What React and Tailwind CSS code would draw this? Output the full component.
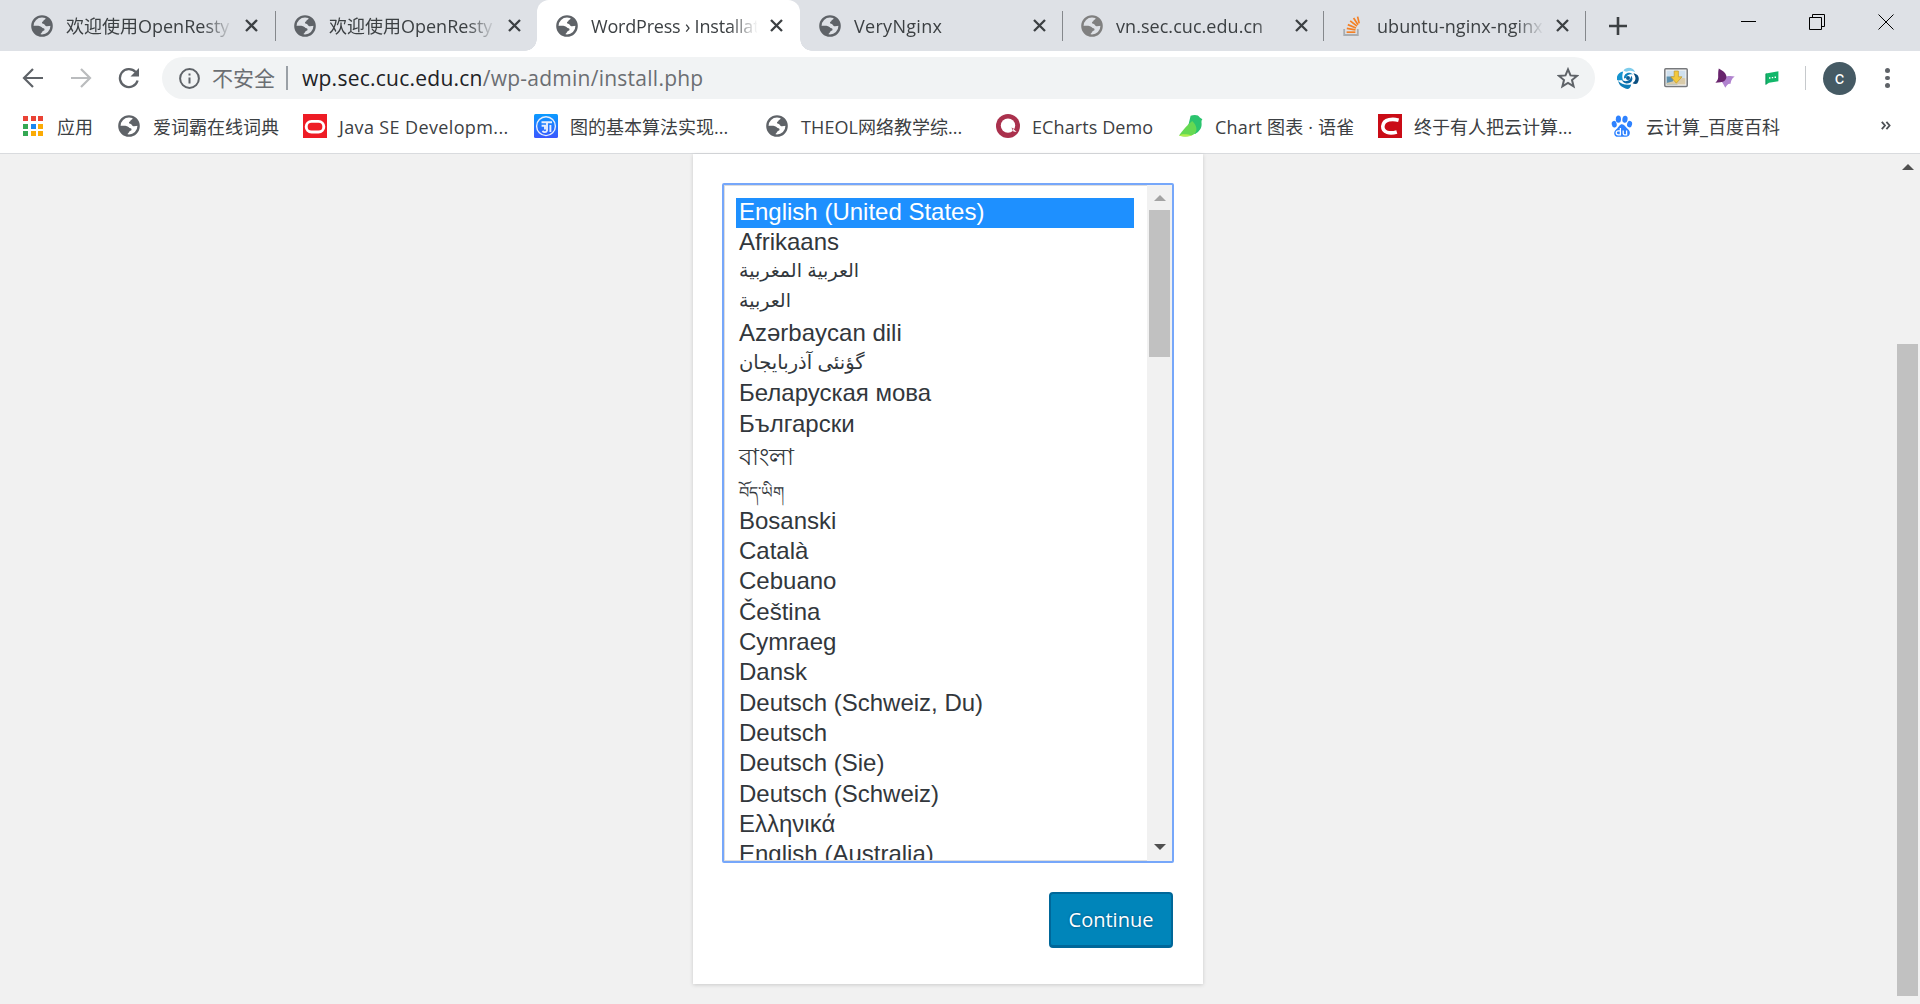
import React from "react";

const UI = "font-['Open_Sans','Noto_Sans_CJK_SC',sans-serif]";

function Globe({ color = "#5f6368" }) {
  return (
    <svg width="22" height="22" viewBox="0 0 22 22" className="shrink-0">
      <circle cx="11" cy="11" r="9.6" fill="none" stroke={color} strokeWidth="2.4" />
      <path
        fill={color}
        d="M14.5 2 C15 3.6 14.4 4.6 13 5 C12.2 5.4 12.6 6.4 11.4 6.8 C10.6 7.2 11 8.6 12 8.8 C13.6 9 14 10.4 14.8 11 C16.4 11.6 18.6 10.6 20.6 10.8 C20.8 6 18 3 14.5 2 Z"
      />
      <path
        fill={color}
        d="M1.6 11 C4 10.8 7 10.6 9 11.2 C10.6 11.6 11 13 12.6 13.2 C14 13.6 13.8 15.6 12.4 15.8 C10.8 16.2 11.4 17.6 10.2 18.2 C9.4 18.8 9.2 19.6 9.2 20.6 C4.6 19.8 1.4 16 1.6 11 Z"
      />
    </svg>
  );
}

function StackIcon() {
  return (
    <svg width="22" height="22" viewBox="0 0 22 22" fill="none" className="shrink-0">
      <path d="M2.2 14v6h13.6v-6" stroke="#a9adb1" strokeWidth="1.8" />
      <g stroke="#f48024" strokeWidth="1.7">
        <path d="M4.6 17.2h8.8" />
        <path d="M4.8 13.4l8.7 1.4" />
        <path d="M5.8 9.6l8.2 3.4" />
        <path d="M8.2 5.8l6.8 5.4" />
        <path d="M11.6 3l4.4 6.8" />
        <path d="M15.6 1.6l1.6 6.8" />
      </g>
    </svg>
  );
}

function CloseX() {
  return (
    <svg width="13" height="13" viewBox="0 0 13 13" className="shrink-0">
      <path d="M1 1l11 11M12 1L1 12" stroke="#3c4043" strokeWidth="2.3" />
    </svg>
  );
}

function Tab({ icon, title, active, sep, width, track }) {
  return (
    <div className={`relative flex h-[51px] shrink-0 items-center pl-[19px] ${width} ${active ? "rounded-t-[12px] bg-white" : ""}`}>
      {active && (
        <>
          <div className="absolute bottom-0 -left-3 h-3 w-3 bg-[radial-gradient(circle_at_0_0,transparent_11.5px,white_12px)]" />
          <div className="absolute bottom-0 -right-3 h-3 w-3 bg-[radial-gradient(circle_at_100%_0,transparent_11.5px,white_12px)]" />
        </>
      )}
      {icon}
      <div className={`ml-[13px] mt-[1px] w-[166px] shrink-0 overflow-hidden whitespace-nowrap text-[18px] leading-[28px] text-[#3c4043] [mask-image:linear-gradient(to_right,black_138px,transparent_167px)] ${track}`}>
        {title}
      </div>
      <div className="ml-[13px] flex">
        <CloseX />
      </div>
      {sep && <div className="absolute -right-[1px] top-[11px] h-[30px] w-[1.5px] bg-[#85888c]" />}
    </div>
  );
}

function Bookmark({ icon, width, children }) {
  return (
    <div className={`flex h-full shrink-0 items-center ${width}`}>
      <div className="flex w-6 shrink-0 items-center justify-center">{icon}</div>
      <div className="ml-3 mt-[2px] whitespace-nowrap text-[18px] leading-[28px] text-[#3c4043]">{children}</div>
    </div>
  );
}

function AppsIcon() {
  return (
    <div className="grid grid-cols-3 gap-[2.5px]">
      <i className="h-[5px] w-[5px] bg-[#ea4335]" />
      <i className="h-[5px] w-[5px] bg-[#ea4335]" />
      <i className="h-[5px] w-[5px] bg-[#ea4335]" />
      <i className="h-[5px] w-[5px] bg-[#34a853]" />
      <i className="h-[5px] w-[5px] bg-[#1a86f0]" />
      <i className="h-[5px] w-[5px] bg-[#fbab05]" />
      <i className="h-[5px] w-[5px] bg-[#34a853]" />
      <i className="h-[5px] w-[5px] bg-[#fbab05]" />
      <i className="h-[5px] w-[5px] bg-[#fbab05]" />
    </div>
  );
}

const OracleIcon = () => (
  <svg width="24" height="24" viewBox="0 0 24 24">
    <rect width="24" height="24" fill="#ee1c25" />
    <rect x="3.2" y="7.4" width="17.6" height="10.6" rx="5.3" fill="none" stroke="#fff" strokeWidth="2.9" />
  </svg>
);

const BlueIcon = () => (
  <svg width="24" height="24" viewBox="0 0 24 24" fill="none" stroke="#e8eefc">
    <defs>
      <linearGradient id="bl" x1="0" y1="0" x2="0" y2="1">
        <stop offset="0" stopColor="#0a9bff" />
        <stop offset="1" stopColor="#3a57ff" />
      </linearGradient>
    </defs>
    <rect width="24" height="24" rx="1.5" fill="url(#bl)" stroke="none" />
    <circle cx="12" cy="12.2" r="9.4" strokeWidth="1.4" />
    <path d="M7.5 8.200h10.500M13 8.200v8.200c-.6 2.400-3.200 2-4.600.6M7.600 11.800h3.400v3.600M16.400 11v7" strokeWidth="1.900" />
  </svg>
);

const EchartsIcon = () => (
  <svg width="24" height="24" viewBox="0 0 24 24">
    <circle cx="12" cy="12" r="12" fill="#aa314d" />
    <circle cx="12" cy="11.6" r="7.2" fill="#fff" />
    <path d="M15.5 13.5l1.8 4.6 4.4 1.2-3.4-4.4z" fill="#aa314d" />
    <path d="M16.6 14.2l.8 3.4 3.2.4z" fill="#fff" />
  </svg>
);

const BirdIcon = () => (
  <svg width="24" height="24" viewBox="0 0 24 24">
    <path d="M11.6 1.8C15 .6 19.6.6 20.8 3.6c1 .8 2 1.2 2.6 1.6-1 .6-1 2.4-.8 4.4.4 5-2.8 8.4-6.4 10.4L8 17z" fill="#2bc46e" />
    <path d="M13.2 7C8 11 4 16 0 21.6c5.6 1.8 12 1 15.6-1.8C18.6 16.6 18 11.4 13.2 7z" fill="#66d952" />
    <path d="M0 21.6c3.6-2.4 8.4-1 13.2-.4C9.2 23.2 3.6 22.8 0 21.6z" fill="#b3ee4f" />
  </svg>
);

const CIcon = () => (
  <svg width="24" height="24" viewBox="0 0 24 24">
    <rect width="24" height="24" fill="#ca0c16" />
    <path d="M20.6 6.2C15.5 4.8 5.5 4.400 4.800 12.400c-.2 6.400 7.200 7.600 14 5.600" fill="none" stroke="#fff" strokeWidth="3.6" />
  </svg>
);

const BaiduIcon = () => (
  <svg width="22" height="24" viewBox="0 0 22 24">
    <g fill="#2e82ff">
      <ellipse cx="7.4" cy="5.2" rx="2.6" ry="3.6" />
      <ellipse cx="14" cy="5.2" rx="2.6" ry="3.5" transform="rotate(10 14 5)" />
      <ellipse cx="3.2" cy="10.2" rx="2.5" ry="3.3" transform="rotate(-12 3 10)" />
      <ellipse cx="18.6" cy="10" rx="2.5" ry="3.3" transform="rotate(12 18 10)" />
      <path d="M11 10.2c2.4 0 3.4 2.4 5 4 2 1.8 3.2 3 2.8 5.4-.4 2.6-2.2 3.4-4.2 3.2-2.6-.2-4.8-.2-7.2 0-2.4.2-4-.8-4.2-3.4-.2-2.4 1.4-3.6 3-5 1.6-1.6 2.400-4.200 4.800-4.200z" />
    </g>
    <path d="M9.4 14v6.8H7.200c-2.6 0-2.600-4 0-4h2M12.200 16.600v3c0 1.200.6 1.300 1.400 1.300h2v-4.300" fill="none" stroke="#fff" strokeWidth="1.3" />
  </svg>
);

const SwirlIcon = () => (
  <svg width="22" height="22" viewBox="0 0 22 22">
    <circle cx="11" cy="11" r="2" fill="#0b5d94" />
    <path d="M6.500 3.600C9 0 15.500-.6 18.200 5.200 15.600 3.400 12.600 3.200 10.200 4.600 8.600 4.800 7.400 4.400 6.500 3.600z" fill="#7fcdec" />
    <path d="M6.200 4.600C5 8 5 10.400 6 13.600 2.400 12.600-.6 15-.2 10.600.2 7.600 2.800 5 6.200 4.600z" fill="#1594cf" />
    <path d="M7 11.400C6.600 6.400 12 3.800 16 7.400 12.800 6.600 9.600 7.600 9 11z" fill="#0d83bf" />
    <path d="M16.400 6.400C21.400 6.400 23.400 11.600 20.400 16.200 19.600 17.200 17 17 15.600 16.200 19.400 13.800 19.200 9.600 16.400 6.400z" fill="#0a4f80" />
    <path d="M14.200 8.800C17 12 14.600 17 9.400 16.600 7 16.200 5.400 14.800 5.200 13 8 15.200 13.400 14.600 14.200 8.800z" fill="#0b6aa6" />
    <path d="M1.200 14C4 17 8.800 18.600 14.200 17.400 13.800 20 12.400 22 10.200 22 5.600 20.800 2 18.400 1.200 14z" fill="#0e7db8" />
  </svg>
);

const PictureIcon = () => (
  <svg width="24" height="20" viewBox="0 0 24 20">
    <rect x=".8" y=".8" width="22.4" height="17.6" rx="1" fill="#f4f4f4" stroke="#77797c" strokeWidth="1.5" />
    <rect x="2.6" y="2.6" width="18.8" height="7.8" fill="#cfe0ee" />
    <path d="M2.600 8.600h7l4 7.800h-11z" fill="#5d90ad" />
    <path d="M2.600 16.600v-1.600l6-1.400 3-4.600 9.800 1.200v6.400z" fill="#d9cbaa" />
    <path d="M10.2 3h4.200v5.800h3.600L12.3 15.2 6.8 8.800h3.400z" fill="#f3c93c" stroke="#c39a2a" strokeWidth=".7" />
  </svg>
);

const StarfishIcon = () => (
  <svg width="20" height="20" viewBox="0 0 20 20">
    <path d="M8 9.5c3.5-1.700 8-2 11.800-.9-2.200 1.600-3.600 3-4.200 7.200-2.600-.4-4 1.400-5.200 4-1.400-2.400-2-4-3.800-6.400z" fill="#b183cf" />
    <path d="M3.8.4C7 2.400 10.600 4 11.400 8c.4 3.800-2.600 6-6 6.200L.4 14.800c1.600-2 2.600-3 2.800-5.600C3.200 6 3 3.400 3.800.4z" fill="#68246d" />
  </svg>
);

const ChatIcon = () => (
  <svg width="14" height="14" viewBox="0 0 14 14">
    <path d="M1 2.400L13.400.2v10L4 11.800 1 13.800z" fill="#12b76a" />
    <path d="M.4 3l1-1v11L.4 14z" fill="#0b8a55" />
    <path d="M4 7h1.400M6.800 6.600h1.400M9.600 6.200H11" stroke="#fff" strokeWidth="1.400" />
  </svg>
);

const Tri = ({ up, color }) => (
  <svg width="12" height="6" viewBox="0 0 12 6">
    <path d={up ? "M0 6L6 0l6 6z" : "M0 0h12L6 6z"} fill={color} />
  </svg>
);

const LANGS = [
  ["English (United States)", "h-[30px] leading-[28px] bg-[#1e90ff] text-white"],
  ["Afrikaans", "h-[30px] leading-[28px]"],
  ["العربية المغربية", "h-[30px] leading-[25px] text-[19px]"],
  ["العربية", "h-[31px] leading-[25px] text-[19px]"],
  ["Azərbaycan dili", "h-[30px] leading-[28px]"],
  ["گؤنئی آذربایجان", "h-[30px] leading-[26px] text-[19.5px]"],
  ["Беларуская мова", "h-[31px] leading-[28px]"],
  ["Български", "h-[32px] leading-[28px]"],
  ["বাংলা", "h-[34px] leading-[30px]"],
  ["བོད་ཡིག", "h-[31px] leading-[34px] text-[16px]"],
  ["Bosanski", "h-[30px] leading-[28px]"],
  ["Català", "h-[30px] leading-[28px]"],
  ["Cebuano", "h-[31px] leading-[28px]"],
  ["Čeština", "h-[30px] leading-[28px]"],
  ["Cymraeg", "h-[30px] leading-[28px]"],
  ["Dansk", "h-[31px] leading-[28px]"],
  ["Deutsch (Schweiz, Du)", "h-[30px] leading-[28px]"],
  ["Deutsch", "h-[30px] leading-[28px]"],
  ["Deutsch (Sie)", "h-[31px] leading-[28px]"],
  ["Deutsch (Schweiz)", "h-[30px] leading-[28px]"],
  ["Ελληνικά", "h-[30px] leading-[28px]"],
  ["English (Australia)", "h-[30px] leading-[28px]"],
];

export default function App() {
  return (
    <div className={`flex h-[1004px] w-[1920px] flex-col overflow-hidden bg-[#f1f1f1] ${UI}`}>
      <header className="shrink-0 border-b border-[#d9dbde] bg-white">
        <div className="flex h-[51px] items-center bg-[#dee1e6] pl-[12px]">
          <Tab icon={<Globe />} title="欢迎使用OpenResty" sep width="w-[263px]" track="" />
          <Tab icon={<Globe />} title="欢迎使用OpenResty" width="w-[262px]" track="" />
          <Tab icon={<Globe />} title="WordPress › Installation" active width="w-[263px]" track="tracking-[-0.2px]" />
          <Tab icon={<Globe />} title="VeryNginx" sep width="w-[262px]" track="tracking-[0.3px]" />
          <Tab icon={<Globe color="#808080" />} title="vn.sec.cuc.edu.cn" sep width="w-[261px]" track="tracking-[0.05px]" />
          <Tab icon={<StackIcon />} title="ubuntu-nginx-nginx" sep width="w-[262px]" track="tracking-[0.05px]" />
          <svg width="18" height="18" viewBox="0 0 18 18" className="ml-[24px]">
            <path d="M9 0v18M0 9h18" stroke="#3c4043" strokeWidth="2.6" />
          </svg>
          <div className="mr-[26px] ml-auto flex items-center gap-[53px] pb-[8px]">
            <div className="h-px w-[15px] bg-black" />
            <svg width="16" height="16" viewBox="0 0 16 16" fill="none" stroke="#000">
              <path d="M.5 3.500h12v12H.500zM3.500 3.500v-3h12v12h-3" />
            </svg>
            <svg width="16" height="16" viewBox="0 0 16 16" fill="none" stroke="#000">
              <path d="M.5.500l15 15M15.500.500l-15 15" />
            </svg>
          </div>
        </div>

        <div className="flex h-[54px] items-center pl-[22px]">
          <svg width="22" height="20" viewBox="0 0 22 20" fill="none" stroke="#5f6368" strokeWidth="2.2">
            <path d="M21 10H2.500M11 1L2 10l9 9" />
          </svg>
          <svg width="22" height="20" viewBox="0 0 22 20" fill="none" stroke="#babcbe" strokeWidth="2.2" className="ml-[26px]">
            <path d="M1 10h18.500M11 1l9 9-9 9" />
          </svg>
          <svg width="22" height="22" viewBox="0 0 22 22" className="ml-[26px]">
            <path d="M17.600 5A9 9 0 1 0 19.600 13.500" fill="none" stroke="#5f6368" strokeWidth="2.3" />
            <path d="M21 1v8.500h-8.500z" fill="#5f6368" />
          </svg>
          <div className="ml-[22px] flex h-[42px] w-[1433px] items-center rounded-full bg-[#f1f3f4] pl-[17px] pr-[16px]">
            <svg width="21" height="21" viewBox="0 0 21 21" fill="none" stroke="#5f6368" strokeWidth="2">
              <circle cx="10.500" cy="10.500" r="9.400" />
              <path d="M10.500 9.400v6M10.500 5.400v2.200" />
            </svg>
            <div className="ml-[12px] w-[74px] whitespace-nowrap text-[21px] leading-[30px] text-[#6b6f73]">不安全</div>
            <div className="h-6 w-[2px] bg-[#9aa0a6]" />
            <div className="ml-[14px] whitespace-nowrap text-[21px] leading-[30px] tracking-[0.25px] text-[#6b6e72]">
              <span className="text-[#202124]">wp.sec.cuc.edu.cn</span>/wp-admin/install.php
            </div>
            <svg width="22" height="22" viewBox="0 0 22 22" className="ml-auto">
              <path d="M11 2.400l2.500 6 6.500.5-5 4.200 1.600 6.300L11 16l-5.600 3.400L7 13.100 2 8.900l6.500-.5z" fill="none" stroke="#5f6368" strokeWidth="2" />
            </svg>
          </div>
          <div className="ml-[22px] flex w-[22px]"><SwirlIcon /></div>
          <div className="ml-[25px] flex w-[24px]"><PictureIcon /></div>
          <div className="ml-[27px] flex w-[20px]"><StarfishIcon /></div>
          <div className="ml-[30px] flex w-[14px]"><ChatIcon /></div>
          <div className="ml-[26px] h-6 w-px bg-[#c6c9cc]" />
          <div className="ml-[17px] flex h-[33px] w-[33px] items-center justify-center rounded-full bg-[#455a64] font-['Roboto',sans-serif] text-[18px] leading-none text-white">
            c
          </div>
          <div className="ml-[29px] flex flex-col gap-[3px]">
            <i className="h-[4.5px] w-[4.5px] rounded-full bg-[#5f6368]" />
            <i className="h-[4.5px] w-[4.5px] rounded-full bg-[#5f6368]" />
            <i className="h-[4.5px] w-[4.5px] rounded-full bg-[#5f6368]" />
          </div>
        </div>

        <div className="flex h-[48px] pl-[21px] pb-[6px]">
          <Bookmark width="w-[96px]" icon={<AppsIcon />}>应用</Bookmark>
          <Bookmark width="w-[186px]" icon={<Globe />}>爱词霸在线词典</Bookmark>
          <Bookmark width="w-[231px]" icon={<OracleIcon />}><span className="tracking-[0.37px]">Java SE Developm...</span></Bookmark>
          <Bookmark width="w-[231px]" icon={<BlueIcon />}>图的基本算法实现<span>...</span></Bookmark>
          <Bookmark width="w-[231px]" icon={<Globe />}><span className="tracking-[0.1px]">THEOL</span>网络教学综...</Bookmark>
          <Bookmark width="w-[183px]" icon={<EchartsIcon />}><span className="tracking-[0.1px]">ECharts Demo</span></Bookmark>
          <Bookmark width="w-[199px]" icon={<BirdIcon />}><span className="tracking-[0.2px]">Chart 图表 · 语雀</span></Bookmark>
          <Bookmark width="w-[232px]" icon={<CIcon />}>终于有人把云计算...</Bookmark>
          <Bookmark width="w-[235px]" icon={<BaiduIcon />}>云计算_百度百科</Bookmark>
          <svg width="10" height="9" viewBox="0 0 10 9" fill="none" stroke="#4d5156" strokeWidth="1.8" className="ml-[36px] mt-[16px]">
            <path d="M.8.800l3.200 3.700L.8 8.200M5.400.800l3.200 3.700-3.200 3.700" />
          </svg>
        </div>
      </header>

      <div className="flex min-h-0 flex-1 justify-between">
        <main className="ml-[693px] flex h-[830px] w-[510px] flex-col bg-white px-[29px] pt-[29px] shadow-[0_1px_4px_rgba(0,0,0,0.16)]">
          <div className="flex h-[680px] w-[452px] shrink-0 overflow-hidden rounded-[2px] border-2 border-[#76a7fa]">
            <div className="flex min-w-0 flex-1 flex-col overflow-hidden border border-r-0 border-[#ddd] pl-[11px] pr-[13px] pt-[12px] font-['Liberation_Sans','DejaVu_Sans',sans-serif] text-[24px] text-[#32373c]">
              {LANGS.map(([name, cls]) => (
                <div key={name} className={`shrink-0 whitespace-nowrap pl-[3px] ${cls}`}>{name}</div>
              ))}
            </div>
            <div className="flex w-[25px] shrink-0 flex-col items-center bg-[#f1f1f1] pt-[10px] pb-[11px]">
              <Tri up color="#a3a3a3" />
              <div className="mt-[9px] h-[147px] w-[21px] bg-[#c1c1c1]" />
              <div className="mt-auto"><Tri color="#505050" /></div>
            </div>
          </div>
          <button className="mt-[29px] mr-[1px] h-[56px] w-[124px] shrink-0 self-end rounded-[4px] border-2 border-b-[3px] border-[#006799] bg-[#0085ba] pt-[1px] text-[20px] text-white [text-shadow:0_-1px_2px_#006799,0_1px_2px_#006799]">
            Continue
          </button>
        </main>
        <div className="flex w-[25px] flex-col items-center bg-[#f1f1f1] pt-[10px]">
          <div className="flex w-full justify-center"><Tri up color="#505050" /></div>
          <div className="mt-[174px] h-[652px] w-[21px] bg-[#c1c1c1]" />
        </div>
      </div>
    </div>
  );
}
